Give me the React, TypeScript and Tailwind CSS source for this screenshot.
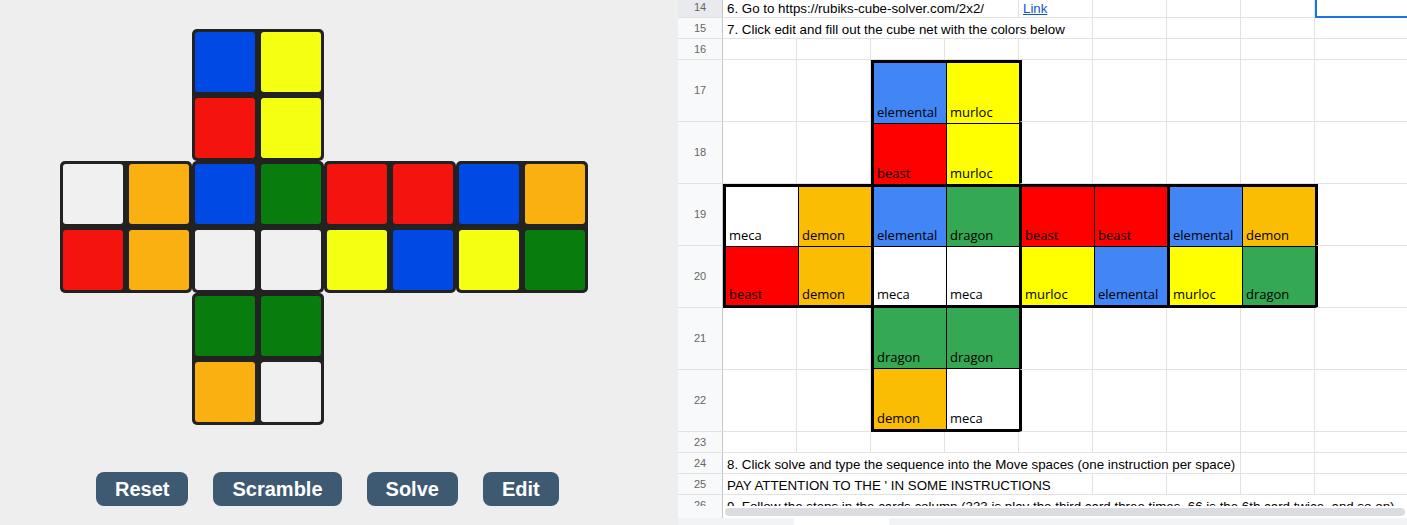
import React from "react";

const cubeColor: Record<string, string> = {
  B: "bg-[#0049e5]",
  Y: "bg-[#f5ff12]",
  R: "bg-[#f5140d]",
  G: "bg-[#087c0d]",
  O: "bg-[#fbb012]",
  W: "bg-[#f0f0f0]",
};

function CubeFace({ cells }: { cells: string[] }) {
  return (
    <div className="w-[132px] h-[132px] shrink-0 bg-[#222222] rounded-[5px] p-[3px] grid grid-cols-2 grid-rows-2 gap-[6px]">
      {cells.map((c, i) => (
        <div key={i} className={`rounded-[3px] ${cubeColor[c]}`} />
      ))}
    </div>
  );
}

function Btn({ label }: { label: string }) {
  return (
    <div className="h-[34px] px-[19px] rounded-[8px] bg-[#3e5a73] text-white font-bold text-[20px] flex items-center font-['Liberation_Sans',Arial,sans-serif]">
      {label}
    </div>
  );
}

const sheetColor: Record<string, string> = {
  B: "bg-[#4285f4]",
  Y: "bg-[#ffff00]",
  R: "bg-[#ff0000]",
  G: "bg-[#34a853]",
  O: "bg-[#fbbc04]",
  W: "bg-white",
};

type SCell = [string, string];

function SheetFace({ cells, border }: { cells: SCell[]; border: string }) {
  return (
    <div className={`w-[148px] h-[124px] shrink-0 border-black bg-black grid grid-cols-2 grid-rows-2 gap-px ${border}`}>
      {cells.map(([c, t], i) => (
        <div
          key={i}
          className={`flex items-end pl-[3px] pb-[2px] text-[13px] leading-[18px] text-black font-['Open_Sans',sans-serif] ${sheetColor[c]}`}
        >
          {t}
        </div>
      ))}
    </div>
  );
}

function Hdr({ n, h = "h-[21px]", sel = false }: { n: string; h?: string; sel?: boolean }) {
  return (
    <div
      className={`w-[45px] shrink-0 ${h} ${sel ? "bg-[#e8eaed]" : "bg-[#f8f9fa]"} border-r border-r-[#c4c7c5] border-b border-b-[#e2e2e2] flex items-center justify-center text-[11px] text-[#666666]`}
    >
      {n}
    </div>
  );
}

function Cell() {
  return <div className="w-[74px] shrink-0 border-r border-b border-[#e2e2e2]" />;
}

function LastCell() {
  return <div className="w-[120px] shrink-0 border-b border-[#e2e2e2]" />;
}

function EmptyCol({ thick = false }: { thick?: boolean }) {
  const cls = thick
    ? "w-[74px] h-[62px] border-r border-b border-[#e2e2e2] border-l-[3px] border-l-black"
    : "w-[74px] h-[62px] border-r border-b border-[#e2e2e2]";
  return (
    <div className="flex flex-col shrink-0">
      <div className={cls} />
      <div className={cls} />
    </div>
  );
}

function LastCol({ thick = false }: { thick?: boolean }) {
  const cls = thick
    ? "w-[120px] h-[62px] border-b border-[#e2e2e2] border-l-[3px] border-l-black"
    : "w-[120px] h-[62px] border-b border-[#e2e2e2]";
  return (
    <div className="flex flex-col shrink-0">
      <div className={cls} />
      <div className={cls} />
    </div>
  );
}

function HdrCol({ a, b }: { a: string; b: string }) {
  return (
    <div className="flex flex-col shrink-0">
      <Hdr n={a} h="h-[62px]" />
      <Hdr n={b} h="h-[62px]" />
    </div>
  );
}

const txt = "pl-[4px] whitespace-nowrap text-[13.33px] leading-[20px] pt-[2px] text-black border-r border-b border-[#e2e2e2] overflow-hidden";

export default function App() {
  return (
    <div className="w-[1407px] h-[525px] flex overflow-hidden">
      {/* Left: cube */}
      <div className="w-[678px] h-full shrink-0 bg-[#eeeeee] flex flex-col">
        <div className="pt-[29px] pl-[60px] flex flex-col">
          <div className="flex pl-[132px]">
            <CubeFace cells={["B", "Y", "R", "Y"]} />
          </div>
          <div className="flex">
            <CubeFace cells={["W", "O", "R", "O"]} />
            <CubeFace cells={["B", "G", "W", "W"]} />
            <CubeFace cells={["R", "R", "Y", "B"]} />
            <CubeFace cells={["B", "O", "Y", "G"]} />
          </div>
          <div className="flex pl-[132px]">
            <CubeFace cells={["G", "G", "O", "W"]} />
          </div>
        </div>
        <div className="flex gap-[25px] pl-[96px] mt-[47px]">
          <Btn label="Reset" />
          <Btn label="Scramble" />
          <Btn label="Solve" />
          <Btn label="Edit" />
        </div>
      </div>

      {/* Right: spreadsheet */}
      <div className="flex-1 h-full overflow-hidden bg-white flex flex-col font-['Liberation_Sans',Arial,sans-serif]">
        <div className="flex h-[21px] -mt-[3px] shrink-0">
          <Hdr n="14" sel />
          <div className={`w-[296px] shrink-0 ${txt}`}>6. Go to https://rubiks-cube-solver.com/2x2/</div>
          <div className={`w-[74px] shrink-0 ${txt}`}>
            <span className="text-[#1155cc] underline">Link</span>
          </div>
          <Cell />
          <Cell />
          <Cell />
          <div className="w-[120px] shrink-0 border-l-2 border-b-2 border-[#1a73e8]" />
        </div>
        <div className="flex h-[21px] shrink-0">
          <Hdr n="15" />
          <div className={`w-[370px] shrink-0 ${txt}`}>7. Click edit and fill out the cube net with the colors below</div>
          <Cell />
          <Cell />
          <Cell />
          <LastCell />
        </div>
        <div className="flex h-[21px] shrink-0">
          <Hdr n="16" />
          <Cell />
          <Cell />
          <Cell />
          <Cell />
          <Cell />
          <Cell />
          <Cell />
          <Cell />
          <LastCell />
        </div>

        {/* Rows 17-18 */}
        <div className="flex h-[124px] shrink-0">
          <HdrCol a="17" b="18" />
          <EmptyCol />
          <EmptyCol />
          <SheetFace
            border="border-l-[3px] border-t-[3px]"
            cells={[
              ["B", "elemental"],
              ["Y", "murloc"],
              ["R", "beast"],
              ["Y", "murloc"],
            ]}
          />
          <EmptyCol thick />
          <EmptyCol />
          <EmptyCol />
          <EmptyCol />
          <LastCol />
        </div>

        {/* Rows 19-20 */}
        <div className="flex h-[124px] shrink-0">
          <HdrCol a="19" b="20" />
          <SheetFace
            border="border-l-[3px] border-y-[3px]"
            cells={[
              ["W", "meca"],
              ["O", "demon"],
              ["R", "beast"],
              ["O", "demon"],
            ]}
          />
          <SheetFace
            border="border-l-[3px] border-y-[3px]"
            cells={[
              ["B", "elemental"],
              ["G", "dragon"],
              ["W", "meca"],
              ["W", "meca"],
            ]}
          />
          <SheetFace
            border="border-l-[3px] border-y-[3px]"
            cells={[
              ["R", "beast"],
              ["R", "beast"],
              ["Y", "murloc"],
              ["B", "elemental"],
            ]}
          />
          <SheetFace
            border="border-l-[3px] border-y-[3px]"
            cells={[
              ["B", "elemental"],
              ["O", "demon"],
              ["Y", "murloc"],
              ["G", "dragon"],
            ]}
          />
          <LastCol thick />
        </div>

        {/* Rows 21-22 */}
        <div className="flex h-[124px] shrink-0">
          <HdrCol a="21" b="22" />
          <EmptyCol />
          <EmptyCol />
          <SheetFace
            border="border-l-[3px] border-b-[3px]"
            cells={[
              ["G", "dragon"],
              ["G", "dragon"],
              ["O", "demon"],
              ["W", "meca"],
            ]}
          />
          <EmptyCol thick />
          <EmptyCol />
          <EmptyCol />
          <EmptyCol />
          <LastCol />
        </div>

        <div className="flex h-[21px] shrink-0">
          <Hdr n="23" />
          <Cell />
          <Cell />
          <Cell />
          <Cell />
          <Cell />
          <Cell />
          <Cell />
          <Cell />
          <LastCell />
        </div>
        <div className="flex h-[21px] shrink-0">
          <Hdr n="24" />
          <div className={`w-[518px] shrink-0 ${txt}`}>
            8. Click solve and type the sequence into the Move spaces (one instruction per space)
          </div>
          <Cell />
          <LastCell />
        </div>
        <div className="flex h-[21px] shrink-0">
          <Hdr n="25" />
          <div className={`w-[370px] shrink-0 ${txt}`}>PAY ATTENTION TO THE ' IN SOME INSTRUCTIONS</div>
          <Cell />
          <Cell />
          <Cell />
          <LastCell />
        </div>
        <div className="h-[11px] shrink-0 overflow-hidden">
          <div className="flex h-[21px]">
            <Hdr n="26" />
            <div className="pl-[4px] whitespace-nowrap text-[13.33px] leading-[20px] pt-[2px] text-black">
              9. Follow the steps in the cards column (333 is play the third card three times, 66 is the 6th card twice, and so on)
            </div>
          </div>
        </div>

        {/* scrollbar */}
        <div className="flex h-[12px] shrink-0">
          <div className="w-[45px] shrink-0 bg-[#f8f9fa] border-r border-r-[#c4c7c5]" />
          <div className="flex-1 bg-white px-[2px] py-[2px] flex">
            <div className="flex-1 rounded-full bg-[#dadce0]" />
          </div>
        </div>

        {/* bottom tab bar */}
        <div className="flex h-[7px] shrink-0 bg-[#f1f3f4] pl-[116px]">
          <div className="w-[95px] bg-white" />
        </div>
      </div>
    </div>
  );
}
